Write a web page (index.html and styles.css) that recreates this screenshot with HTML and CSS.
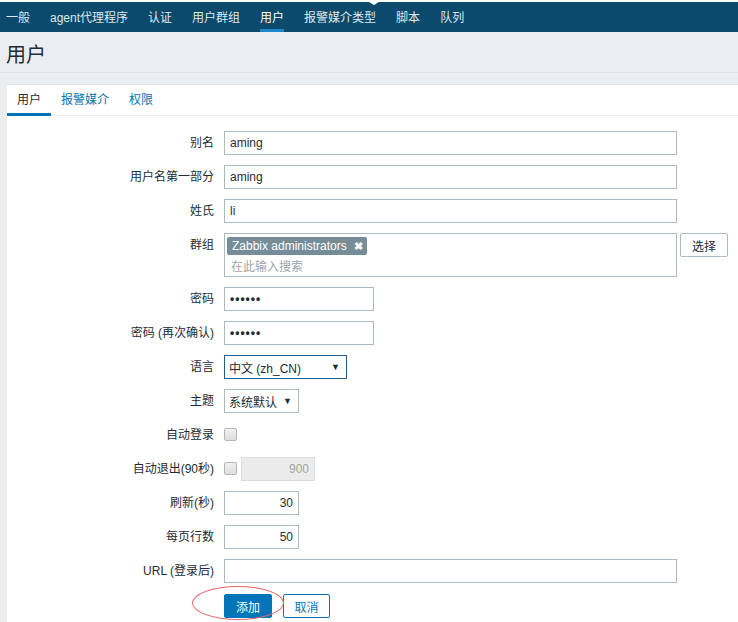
FILE: index.html
```html
<!DOCTYPE html>
<html lang="zh-CN">
<head>
<meta charset="utf-8">
<title>用户</title>
<link rel="stylesheet" href="styles.css">
</head>
<body>
<div class="topstrip"><span class="notch"></span></div>
<nav class="subnav">
  <a class="navitem">一般</a>
  <a class="navitem">agent代理程序</a>
  <a class="navitem">认证</a>
  <a class="navitem">用户群组</a>
  <a class="navitem active">用户</a>
  <a class="navitem">报警媒介类型</a>
  <a class="navitem">脚本</a>
  <a class="navitem">队列</a>
</nav>
<header class="pagehead"><h1>用户</h1></header>
<main class="panel">
  <div class="tabs">
    <a class="tab active">用户</a>
    <a class="tab">报警媒介</a>
    <a class="tab">权限</a>
  </div>
  <form class="form">
    <div class="row"><label class="lbl">别名</label><input class="inp long" type="text" value="aming"></div>
    <div class="row"><label class="lbl">用户名第一部分</label><input class="inp long" type="text" value="aming"></div>
    <div class="row"><label class="lbl">姓氏</label><input class="inp long" type="text" value="li"></div>
    <div class="row"><label class="lbl">群组</label>
      <div class="multi">
        <div class="tagline"><span class="tag">Zabbix administrators<span class="tagx">✖</span></span></div>
        <div class="placeholder">在此输入搜索</div>
      </div>
      <button type="button" class="btn-alt">选择</button>
    </div>
    <div class="row"><label class="lbl">密码</label><input class="inp mid pw" type="password" value="aaaaaa"></div>
    <div class="row"><label class="lbl">密码 (再次确认)</label><input class="inp mid pw" type="password" value="aaaaaa"></div>
    <div class="row"><label class="lbl">语言</label><div class="sel lang focus"><span>中文 (zh_CN)</span><span class="arrow">▼</span></div></div>
    <div class="row"><label class="lbl">主题</label><div class="sel theme"><span>系统默认</span><span class="arrow">▼</span></div></div>
    <div class="row"><label class="lbl">自动登录</label><span class="chk"></span></div>
    <div class="row"><label class="lbl">自动退出(90秒)</label><span class="chk"></span><input class="inp small num disabled" type="text" value="900" disabled></div>
    <div class="row"><label class="lbl">刷新(秒)</label><input class="inp small num" type="text" value="30"></div>
    <div class="row"><label class="lbl">每页行数</label><input class="inp small num" type="text" value="50"></div>
    <div class="row"><label class="lbl">URL (登录后)</label><input class="inp long" type="text" value=""></div>
    <div class="row buttons"><span class="lbl"></span>
      <div class="btnwrap"><button type="button" class="btn-main">添加</button><span class="ring"></span></div>
      <button type="button" class="btn-sec">取消</button>
    </div>
  </form>
</main>
</body>
</html>
```
FILE: styles.css
```css
* { box-sizing: border-box; }
html, body { margin: 0; padding: 0; }
body {
  background: #ebeef0;
  font-family: "Liberation Sans", "Noto Sans CJK SC", sans-serif;
  font-size: 12px;
  color: #1f2c33;
  width: 738px;
  overflow: hidden;
}
.topstrip { height: 2px; background: #ffffff; position: relative; }
.notch {
  position: absolute; left: 369px; top: 2px; width: 0; height: 0;
  border-left: 5px solid transparent; border-right: 5px solid transparent;
  border-top: 3px solid #ffffff; z-index: 2;
}
.subnav {
  display: flex; gap: 20px; height: 30px; padding-left: 6px;
  background: #0c4a6c;
}
.navitem {
  display: flex; align-items: center; height: 30px; line-height: 14px;
  color: #dfe8ee; white-space: nowrap; padding-top: 1px;
}
.navitem.active { color: #ffffff; box-shadow: inset 0 -3px 0 #1d87cc; }
.pagehead {
  margin: 0; padding: 11px 0 5px 6px;
  border-bottom: 1px solid #dde2e6;
}
.pagehead h1 {
  margin: 0; font-size: 20px; font-weight: normal; line-height: 24px; color: #1f2c33;
}
.panel {
  margin: 11px 0 0 7px; background: #ffffff;
  border-top: 1px solid #dfe4e7;
  height: 560px;
}
.tabs { display: flex; height: 31px; border-bottom: 1px solid #e9ecee; }
.tab {
  padding: 0 10px; height: 31px; display: flex; align-items: center;
  color: #0275b8; line-height: 14px; padding-bottom: 2px;
}
.tab.active { color: #1f2c33; box-shadow: inset 0 -3px 0 #0275b8; }
.form { display: flex; flex-direction: column; gap: 10px; padding-top: 15px; }
.row { display: flex; align-items: flex-start; gap: 10px; }
.lbl {
  width: 207px; flex: none; text-align: right; line-height: 24px; white-space: nowrap;
}
.inp {
  height: 24px; border: 1px solid #acbbc2; background: #ffffff; padding: 0 5px;
  font-family: inherit; font-size: 12px; color: #1f2c33; outline: none; margin: 0;
}
.inp.long { width: 453px; }
.inp.mid { width: 150px; }
.inp.small { width: 75px; }
.inp.num { text-align: right; }
.inp.disabled {
  background: #ebebeb; border-color: #dcdcdc; color: #a3a3a3; width: 74px; margin-left: -6px;
}
.inp.pw { font-size: 12px; letter-spacing: 1px; font-weight: bold; }
.multi {
  width: 453px; height: 44px; border: 1px solid #acbbc2; padding: 2px 2px 0;
  flex: none;
}
.tagline { height: 19px; display: flex; padding-top: 1px; }
.tag {
  display: inline-flex; align-items: center; height: 18px; background: #768d99; color: #ffffff;
  padding: 0 4px 0 5px; border-radius: 2px; line-height: 14px; white-space: nowrap;
}
.tagx { font-size: 11px; font-weight: bold; margin-left: 7px; }
.placeholder { color: #9da6ab; line-height: 14px; padding: 5px 0 0 4px; }
.btn-alt {
  margin-left: -7px; width: 48px; height: 24px; border: 1px solid #acbbc2; border-radius: 2px;
  background: #ffffff; font-family: inherit; font-size: 12px; color: #1f2c33; padding: 0;
}
.sel {
  height: 24px; border: 1px solid #acbbc2; display: flex; align-items: center;
  justify-content: space-between; padding: 0 6px 0 4px; background: #fff;
}
.sel.focus { border-color: #23608f; }
.sel.lang { width: 123px; }
.sel.theme { width: 75px; }
.arrow { font-size: 9px; }
.chk {
  width: 13px; height: 13px; border: 1px solid #b1b8bd; border-radius: 2px;
  background: linear-gradient(#f0f0f0, #dedede); margin-top: 5px; flex: none;
}
.buttons { margin-top: 1px; }
.btnwrap { position: relative; }
.btn-main {
  width: 48px; height: 24px; background: #0275b8; color: #ffffff; border: 1px solid #0275b8;
  border-radius: 2px; font-family: inherit; font-size: 12px; padding: 0;
}
.btn-sec {
  width: 47px; height: 24px; background: #ffffff; color: #0275b8; border: 1px solid #0275b8;
  border-radius: 2px; font-family: inherit; font-size: 12px; padding: 0; margin-left: 1px;
}
.ring {
  position: absolute; left: -32px; top: -8px; width: 92px; height: 34px;
  border: 1px solid #e8686a; border-radius: 50%; pointer-events: none;
}
```
